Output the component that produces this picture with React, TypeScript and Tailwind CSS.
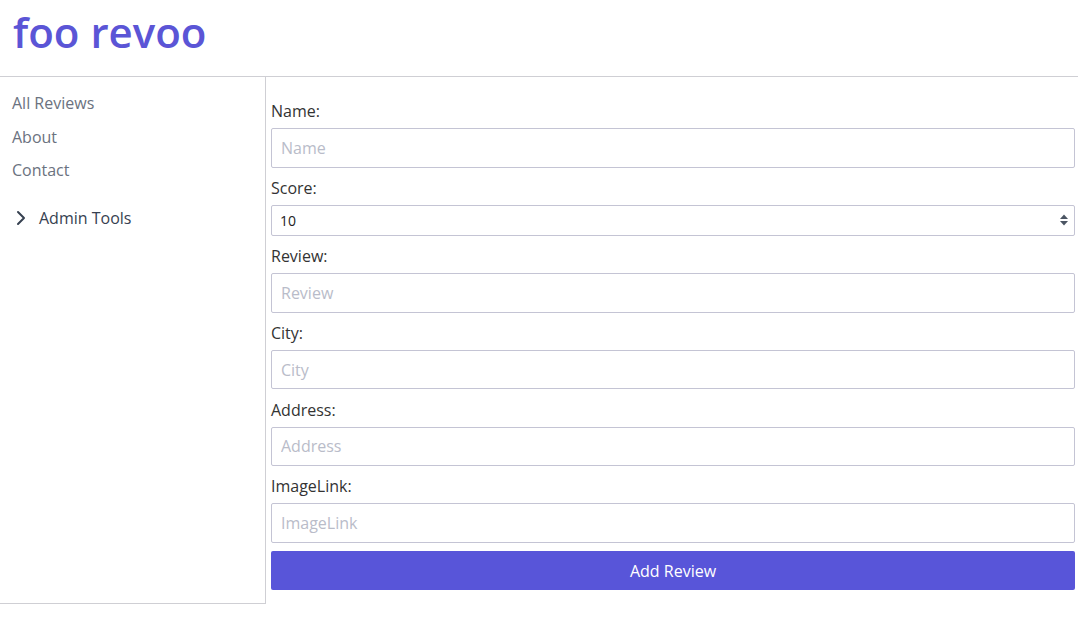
import React from "react";

function Field({ label, ph }: { label: string; ph: string }) {
  return (
    <div className="flex flex-col">
      <label className="block h-6 leading-6 text-[16px] text-[#333]">{label}</label>
      <input
        placeholder={ph}
        className="mt-[5px] h-[39.5px] w-full rounded-[2px] border border-[#c4c4d4] px-[9px] text-[16px] text-[#333] placeholder:text-[#b9bcc9] outline-none"
      />
    </div>
  );
}

export default function App() {
  return (
    <div className="w-[1078px] h-[641px] bg-white" style={{ fontFamily: '"Open Sans", "Noto Sans", sans-serif' }}>
      <header className="h-[77px] border-b border-[#cfcfd4] pl-[13px] pt-[3px]">
        <h1 className="text-[42px] leading-[58px] font-semibold text-[#5b55d6]">foo revoo</h1>
      </header>
      <div className="flex">
        <aside className="w-[266px] h-[527px] shrink-0 border-r border-b border-[#cfcfd4] pt-[9px]">
          <nav className="flex flex-col pl-[12px]">
            <a className="block h-[33.5px] py-[5px] leading-6 text-[16px] text-[#6b7280]">All Reviews</a>
            <a className="block h-[33.5px] py-[5px] leading-6 text-[16px] text-[#6b7280]">About</a>
            <a className="block h-[33.5px] py-[5px] leading-6 text-[16px] text-[#6b7280]">Contact</a>
          </nav>
          <div className="mt-[14px] flex items-center py-[5px] pl-[15px] leading-6 text-[16px] text-[#374151]">
            <svg width="12" height="16" viewBox="0 0 12 16" fill="none" className="mr-[12px]">
              <path d="M3 2 L9 8 L3 14" stroke="#374151" strokeWidth="2" strokeLinecap="round" strokeLinejoin="round" />
            </svg>
            <span>Admin Tools</span>
          </div>
        </aside>
        <main className="flex-1 pl-[5px] pr-[3px] pt-[22px] flex flex-col gap-[8.25px]">
          <Field label="Name:" ph="Name" />
          <div className="flex flex-col">
            <label className="block h-6 leading-6 text-[16px] text-[#333]">Score:</label>
            <div className="relative mt-[5px]">
              <select
                defaultValue="10"
                className="h-[31px] w-full appearance-none rounded-[2px] border border-[#c4c4d4] bg-white pl-[8px] text-[14px] text-[#222] outline-none"
              >
                {[10, 9, 8, 7, 6, 5, 4, 3, 2, 1].map((n) => (
                  <option key={n} value={String(n)}>{n}</option>
                ))}
              </select>
              <svg width="10" height="14" viewBox="0 0 10 14" className="pointer-events-none absolute right-[6px] top-[8.5px]">
                <path d="M1 6 L5 1.5 L9 6 Z" fill="#4b5563" />
                <path d="M1 8 L5 12.5 L9 8 Z" fill="#4b5563" />
              </svg>
            </div>
          </div>
          <Field label="Review:" ph="Review" />
          <Field label="City:" ph="City" />
          <Field label="Address:" ph="Address" />
          <Field label="ImageLink:" ph="ImageLink" />
          <button className="h-[39px] w-full rounded-[2px] bg-[#5855d9] text-[16px] text-white">Add Review</button>
        </main>
      </div>
    </div>
  );
}
